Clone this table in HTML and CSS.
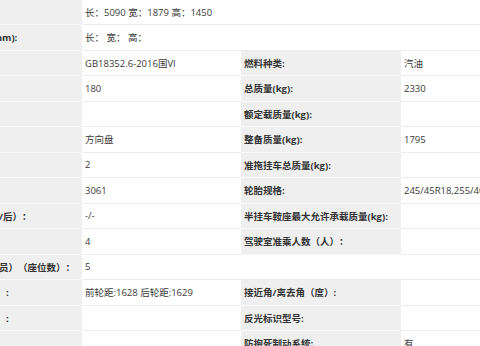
FILE: index.html
```html
<!DOCTYPE html>
<html lang="zh-CN">
<head>
<meta charset="utf-8">
<title>车辆参数</title>
<link rel="stylesheet" href="styles.css">
</head>
<body>
<div class="spec">
  <div class="k">外形尺寸(mm):</div>
  <div class="v span3">长：5090 宽：1879 高：1450</div>

  <div class="k">货箱栏板内尺寸(mm):</div>
  <div class="v span3">长： 宽： 高：</div>

  <div class="k">排放标准:</div>
  <div class="v">GB18352.6-2016国VI</div>
  <div class="k">燃料种类:</div>
  <div class="v">汽油</div>

  <div class="k">最高车速:</div>
  <div class="v">180</div>
  <div class="k">总质量(kg):</div>
  <div class="v">2330</div>

  <div class="k">载质量系数:</div>
  <div class="v"></div>
  <div class="k">额定载质量(kg):</div>
  <div class="v"></div>

  <div class="k">转向形式:</div>
  <div class="v">方向盘</div>
  <div class="k">整备质量(kg):</div>
  <div class="v">1795</div>

  <div class="k">轴数:</div>
  <div class="v">2</div>
  <div class="k">准拖挂车总质量(kg):</div>
  <div class="v"></div>

  <div class="k">轴距(mm):</div>
  <div class="v">3061</div>
  <div class="k">轮胎规格:</div>
  <div class="v">245/45R18,255/40R18</div>

  <div class="k">钢板弹簧片数（前/后）：</div>
  <div class="v">-/-</div>
  <div class="k">半挂车鞍座最大允许承载质量(kg):</div>
  <div class="v"></div>

  <div class="k">轮胎数:</div>
  <div class="v">4</div>
  <div class="k">驾驶室准乘人数（人）：</div>
  <div class="v"></div>

  <div class="k">额定载客（含驾驶员）（座位数）：</div>
  <div class="v span3">5</div>

  <div class="k">轮距(前/后)(mm)　:</div>
  <div class="v">前轮距:1628 后轮距:1629</div>
  <div class="k">接近角/离去角（度）:</div>
  <div class="v"></div>

  <div class="k">悬长(前/后)(mm)　:</div>
  <div class="v"></div>
  <div class="k">反光标识型号:</div>
  <div class="v"></div>

  <div class="k">底盘型号:</div>
  <div class="v"></div>
  <div class="k">防抱死制动系统:</div>
  <div class="v">有</div>
</div>
</body>
</html>
```

FILE: styles.css
```css
html, body {
  margin: 0;
  padding: 0;
  overflow: hidden;
  background: #ffffff;
}

body {
  width: 480px;
  height: 346px;
  font-family: "Open Sans", "Noto Sans CJK SC", sans-serif;
  font-size: 9.5px;
  color: #333333;
  text-spacing-trim: space-all;
}

.spec {
  display: grid;
  grid-template-columns: 162px 159px 160px 160px;
  grid-auto-rows: 25.5px;
  margin-left: -80px;
  margin-top: -0.5px;
  width: 641px;
}

.k, .v {
  box-sizing: border-box;
  display: flex;
  align-items: center;
  padding-left: 3px;
  white-space: nowrap;
  overflow: hidden;
}

.k {
  background: #efefef;
  border-bottom: 1px solid #f9f9f9;
  font-weight: 700;
  color: #333333;
}

.v {
  background: #ffffff;
  border-bottom: 1px solid #ececec;
  color: #3a3a3a;
}

.span3 {
  grid-column: span 3;
}
```
